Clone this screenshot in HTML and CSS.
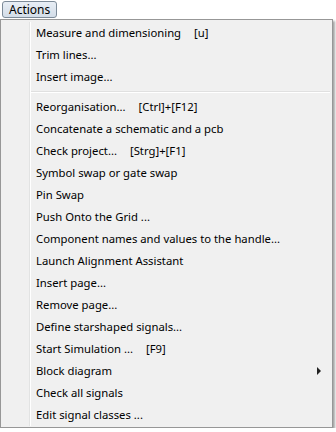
FILE: index.html
```html
<!DOCTYPE html>
<html lang="en">
<head>
    <meta charset="UTF-8">
    <title>Actions menu</title>
    <link rel="stylesheet" href="styles.css">
</head>
<body>
    <div class="menubar">
        <span class="menu-title">Actions</span>
    </div>
    <div class="popup">
        <ul class="items">
            <li>Measure and dimensioning <span class="key">[u]</span></li>
            <li>Trim lines...</li>
            <li>Insert image...</li>
            <li class="sep"></li>
            <li>Reorganisation... <span class="key">[Ctrl]+[F12]</span></li>
            <li>Concatenate a schematic and a pcb</li>
            <li>Check project... <span class="key">[Strg]+[F1]</span></li>
            <li>Symbol swap or gate swap</li>
            <li>Pin Swap</li>
            <li>Push Onto the Grid ...</li>
            <li>Component names and values to the handle...</li>
            <li>Launch Alignment Assistant</li>
            <li>Insert page...</li>
            <li>Remove page...</li>
            <li>Define starshaped signals...</li>
            <li>Start Simulation ... <span class="key">[F9]</span></li>
            <li class="sub">Block diagram</li>
            <li>Check all signals</li>
            <li>Edit signal classes ...</li>
        </ul>
    </div>
</body>
</html>
```

FILE: styles.css
```css
body {
    margin: 0;
    background: #fff;
    font-family: "Noto Sans", "Open Sans", sans-serif;
    font-size: 11.3px;
    color: #000;
}
.menubar {
    height: 18px;
    padding: 1px 0 0 2px;
}
.menu-title {
    display: inline-block;
    height: 15px;
    line-height: 15px;
    padding: 0 6px;
    border: 1px solid #7d8b99;
    border-radius: 3px;
    background: linear-gradient(#e8eef5, #d3dde8);
    font-size: 12px;
}
.popup {
    width: 331px;
    border: 1px solid #979797;
    background: #f0f0f0;
    box-shadow: 2px 2px 2px rgba(0, 0, 0, 0.35);
    padding: 2px 0 1px 0;
}
.items {
    list-style: none;
    margin: 0;
    padding: 0 2px;
    background: linear-gradient(to right, transparent 28px, #e2e3e3 28px, #e2e3e3 29px, #fff 29px, #fff 30px, transparent 30px);
}
.items li {
    height: 22px;
    line-height: 22px;
    padding-left: 33px;
    position: relative;
    white-space: nowrap;
}
.items .key {
    margin-left: 10px;
}
.items .sep {
    height: 8px;
    margin-left: 28px;
    padding: 0;
    background: linear-gradient(transparent 3px, #e0e0e0 3px, #e0e0e0 4px, #fff 4px, #fff 5px, transparent 5px);
}
.items .sub::after {
    content: "";
    position: absolute;
    right: 9px;
    top: 7px;
    border-left: 4px solid #222;
    border-top: 4px solid transparent;
    border-bottom: 4px solid transparent;
}
```
